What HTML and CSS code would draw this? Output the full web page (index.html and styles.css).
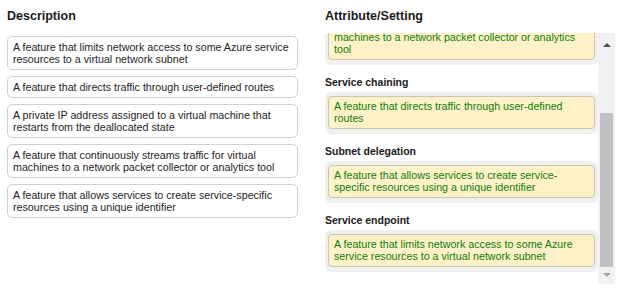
FILE: index.html
```html
<!DOCTYPE html>
<html lang="en">
<head>
<meta charset="utf-8">
<title>Match the attributes</title>
<link rel="stylesheet" href="styles.css">
</head>
<body>
<div class="page">
  <section class="col col-desc">
    <h2 class="col-title">Description</h2>
    <ul class="desc-list">
      <li class="desc-card">A feature that limits network access to some Azure service resources to a virtual network subnet</li>
      <li class="desc-card">A feature that directs traffic through user-defined routes</li>
      <li class="desc-card">A private IP address assigned to a virtual machine that restarts from the deallocated state</li>
      <li class="desc-card">A feature that continuously streams traffic for virtual machines to a network packet collector or analytics tool</li>
      <li class="desc-card">A feature that allows services to create service-specific resources using a unique identifier</li>
    </ul>
  </section>
  <section class="col col-attr">
    <h2 class="col-title">Attribute/Setting</h2>
    <div class="attr-box">
      <div class="attr-scroll" id="attrScroll">
        <div class="attr-list">
          <div class="attr-item">
            <div class="attr-label">Virtual network TAP</div>
            <div class="attr-slot"><div class="answer-card">A feature that continuously streams traffic for virtual machines to a network packet collector or analytics tool</div></div>
          </div>
          <div class="attr-item">
            <div class="attr-label">Service chaining</div>
            <div class="attr-slot"><div class="answer-card">A feature that directs traffic through user-defined routes</div></div>
          </div>
          <div class="attr-item">
            <div class="attr-label">Subnet delegation</div>
            <div class="attr-slot"><div class="answer-card">A feature that allows services to create service-specific resources using a unique identifier</div></div>
          </div>
          <div class="attr-item">
            <div class="attr-label">Service endpoint</div>
            <div class="attr-slot"><div class="answer-card">A feature that limits network access to some Azure service resources to a virtual network subnet</div></div>
          </div>
        </div>
      </div>
      <div class="scrollbar" aria-hidden="true">
        <div class="sb-btn sb-up"></div>
        <div class="sb-track"><div class="sb-thumb"></div></div>
        <div class="sb-btn sb-down"></div>
      </div>
    </div>
  </section>
</div>
<script src="script.js"></script>
</body>
</html>
```
FILE: styles.css
```css
body {
  margin: 0;
  font-family: "Liberation Sans", Arial, sans-serif;
  color: #222;
  background: #fff;
}

.page {
  display: flex;
  gap: 27px;
  padding: 9px 0 0 7px;
}

.col-desc { width: 291px; }
.col-attr { width: 290px; }

.col-title {
  margin: 0;
  font-size: 12.5px;
  line-height: 15px;
  font-weight: bold;
  color: #1a1a1a;
}

.desc-list {
  list-style: none;
  margin: 12px 0 0;
  padding: 0;
  display: flex;
  flex-direction: column;
  gap: 6px;
}

.desc-card {
  border: 1px solid #cfcfcf;
  border-radius: 5px;
  padding: 4px 5px;
  font-size: 10.7px;
  line-height: 12px;
  color: #1e1e1e;
}

.attr-box {
  margin-top: 9px;
  height: 251px;
  display: flex;
}

.attr-scroll {
  flex: 1;
  min-width: 0;
  overflow: hidden;
}

.attr-list {
  padding: 10px 0 12px;
}

.attr-item { margin-top: 11px; }

.attr-label {
  font-size: 10.5px;
  font-weight: bold;
  line-height: 13px;
  margin-bottom: 3px;
  color: #1a1a1a;
}

.attr-slot {
  background: #f0f0f0;
  border-radius: 6px;
  padding: 4px 3px 5px;
}

.answer-card {
  background: #fff2c8;
  border: 1px solid #cbc6b2;
  border-radius: 4px;
  padding: 3px 5px;
  font-size: 10.7px;
  line-height: 12.5px;
  color: #0a7f0a;
}

.scrollbar {
  width: 17px;
  flex: none;
  background: #f1f1f1;
  display: flex;
  flex-direction: column;
}

.sb-btn {
  height: 17px;
  flex: none;
  display: flex;
  justify-content: center;
}

.sb-up::before {
  content: "";
  margin-top: 10px;
  border-left: 4px solid transparent;
  border-right: 4px solid transparent;
  border-bottom: 4px solid #505050;
  height: 0;
}

.sb-down::before {
  content: "";
  margin-top: 6px;
  border-left: 4px solid transparent;
  border-right: 4px solid transparent;
  border-top: 4px solid #a3a3a3;
  height: 0;
}

.sb-track {
  flex: 1;
  display: flex;
  flex-direction: column;
  justify-content: flex-end;
  padding: 0 2px;
}

.sb-thumb {
  height: 154px;
  background: #c1c1c1;
}
```
FILE: script.js
```js
var box = document.getElementById('attrScroll');
box.scrollTop = box.scrollHeight;
```
